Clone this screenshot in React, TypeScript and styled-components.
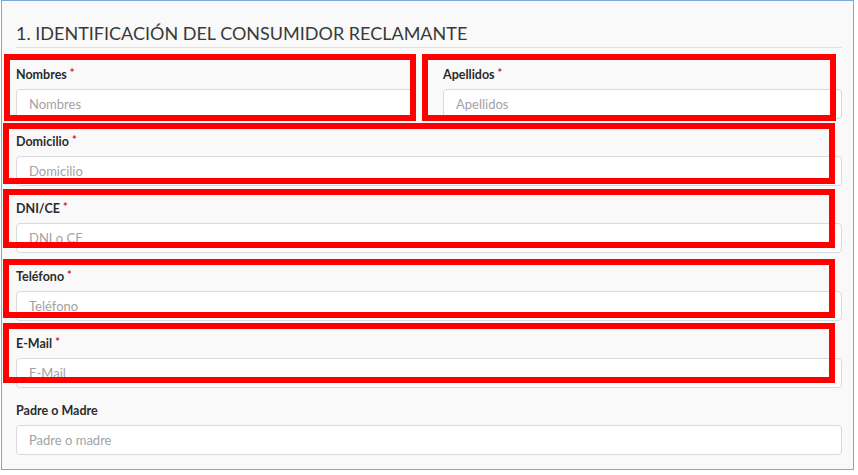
import React from 'react';
import styled, { createGlobalStyle } from 'styled-components';

const GlobalStyle = createGlobalStyle`
  body {
    margin: 0;
    background: #ffffff;
    font-family: 'Lato', 'Noto Sans', sans-serif;
  }
`;

const Panel = styled.section`
  position: relative;
  box-sizing: border-box;
  width: 853px;
  height: 470px;
  margin-left: 1px;
  padding: 0 11px 0 14px;
  background: #f9f9f9;
  border: 1px solid #7ea7e0;
`;

const Title = styled.h2`
  margin: 20px 0 0;
  padding-bottom: 2px;
  border-bottom: 1px solid #e2e2e2;
  font-size: 18px;
  line-height: 24px;
  font-weight: 400;
  color: #3a3a3a;
`;

const Form = styled.div`
  display: flex;
  flex-direction: column;
  gap: 13.4px;
  padding-top: 16.5px;
`;

const Row = styled.div`
  display: grid;
  grid-template-columns: 1fr 1fr;
  column-gap: 28px;
`;

const Field = styled.label`
  display: flex;
  flex-direction: column;
  gap: 4px;
`;

const Label = styled.span`
  display: block;
  height: 20px;
  font-size: 12.5px;
  line-height: 20px;
  font-weight: 700;
  color: #2b2b2b;
`;

const Required = styled.span`
  color: #d0202a;
  margin-left: 3px;
  font-size: 11px;
  line-height: 0;
  vertical-align: 2px;
`;

const Input = styled.input`
  box-sizing: border-box;
  display: block;
  height: 30px;
  width: 100%;
  margin: 0;
  padding: 0 12px;
  border: 1px solid #dadada;
  border-radius: 4px;
  background: #ffffff;
  font-family: inherit;
  font-size: 13px;
  color: #333;

  &::placeholder {
    color: #a3a3a3;
  }
`;

const Highlight = styled.div`
  position: absolute;
  box-sizing: border-box;
  border: 6px solid #ff0000;
  pointer-events: none;
`;

type FieldProps = { label: string; placeholder: string; required?: boolean };

const FormField: React.FC<FieldProps> = ({ label, placeholder, required }) => (
  <Field>
    <Label>
      {label}
      {required && <Required>*</Required>}
    </Label>
    <Input placeholder={placeholder} />
  </Field>
);

// annotation boxes, page coordinates minus panel origin (2,1)
const highlights = [
  { x: 4, y: 54, w: 412, h: 67 },
  { x: 422, y: 54, w: 414, h: 67 },
  { x: 3, y: 123, w: 832, h: 61 },
  { x: 3, y: 189, w: 832, h: 59 },
  { x: 3, y: 259, w: 832, h: 59 },
  { x: 3, y: 323, w: 832, h: 60 },
];

const App: React.FC = () => (
  <>
    <GlobalStyle />
    <Panel>
      <Title>1. IDENTIFICACIÓN DEL CONSUMIDOR RECLAMANTE</Title>
      <Form>
        <Row>
          <FormField label="Nombres" placeholder="Nombres" required />
          <FormField label="Apellidos" placeholder="Apellidos" required />
        </Row>
        <FormField label="Domicilio" placeholder="Domicilio" required />
        <FormField label="DNI/CE" placeholder="DNI o CE" required />
        <FormField label="Teléfono" placeholder="Teléfono" required />
        <FormField label="E-Mail" placeholder="E-Mail" required />
        <FormField label="Padre o Madre" placeholder="Padre o madre" />
      </Form>
      {highlights.map((b, i) => (
        <Highlight
          key={i}
          style={{ left: b.x - 2, top: b.y - 1, width: b.w, height: b.h }}
        />
      ))}
    </Panel>
  </>
);

export default App;
